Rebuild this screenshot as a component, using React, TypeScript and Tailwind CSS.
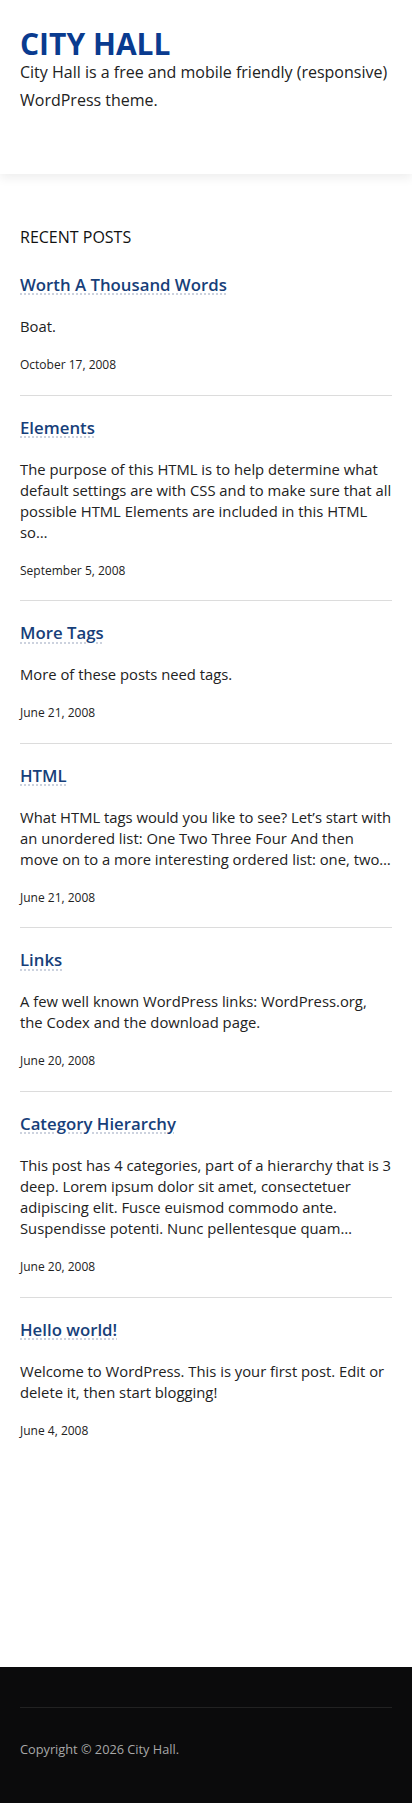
const posts = [
  {
    title: "Worth A Thousand Words",
    excerpt: "Boat.",
    date: "October 17, 2008",
  },
  {
    title: "Elements",
    excerpt:
      "The purpose of this HTML is to help determine what default settings are with CSS and to make sure that all possible HTML Elements are included in this HTML so…",
    date: "September 5, 2008",
  },
  {
    title: "More Tags",
    excerpt: "More of these posts need tags.",
    date: "June 21, 2008",
  },
  {
    title: "HTML",
    excerpt:
      "What HTML tags would you like to see? Let’s start with an unordered list: One Two Three Four And then move on to a more interesting ordered list: one, two…",
    date: "June 21, 2008",
  },
  {
    title: "Links",
    excerpt:
      "A few well known WordPress links: WordPress.org, the Codex and the download page.",
    date: "June 20, 2008",
  },
  {
    title: "Category Hierarchy",
    excerpt:
      "This post has 4 categories, part of a hierarchy that is 3 deep. Lorem ipsum dolor sit amet, consectetuer adipiscing elit. Fusce euismod commodo ante. Suspendisse potenti. Nunc pellentesque quam…",
    date: "June 20, 2008",
  },
  {
    title: "Hello world!",
    excerpt:
      "Welcome to WordPress. This is your first post. Edit or delete it, then start blogging!",
    date: "June 4, 2008",
  },
];

export default function App() {
  return (
    <div className="min-h-[1803px] bg-white font-['Open_Sans',sans-serif] text-[#222]">
      <header className="relative pl-5 pr-4 pt-[29px] pb-[60px] shadow-[0_4px_10px_rgba(0,0,0,0.07)]">
        <h1 className="text-[30px] font-bold leading-[29px] text-[#0a3b8f]">
          <a href="#">CITY HALL</a>
        </h1>
        <p className="text-[16px] leading-[28px] text-[#222]">
          City Hall is a free and mobile friendly (responsive) WordPress theme.
        </p>
      </header>

      <main className="px-5 pt-[51px] pb-[226px]">
        <h2 className="text-[16px] leading-6 uppercase text-[#111]">Recent Posts</h2>
        <div className="mt-[24px]">
          {posts.map((post, i) => (
            <article
              key={post.title}
              className={`${i === 0 ? "" : "pt-5"} ${
                i === posts.length - 1 ? "" : "border-b border-[#dcdcdc] pb-[19.6px]"
              }`}
            >
              <h3 className="text-[16.8px] font-semibold leading-6">
                <a
                  href="#"
                  className="text-[#173f7a] underline decoration-dotted decoration-[#c3cad8] underline-offset-[3px]"
                >
                  {post.title}
                </a>
              </h3>
              <p className="mt-[19px] text-[14.8px] leading-[21px]">{post.excerpt}</p>
              <p className="mt-[18px] text-[12px] leading-5 text-[#222]">{post.date}</p>
            </article>
          ))}
        </div>
      </main>

      <footer className="bg-[#0b0b0c] px-5 pt-10 pb-[45px]">
        <div className="border-t border-[#222] pt-[31px] text-[12.75px] leading-5 text-[#a8a8a8]">
          Copyright © 2026 City Hall.
        </div>
      </footer>
    </div>
  );
}
